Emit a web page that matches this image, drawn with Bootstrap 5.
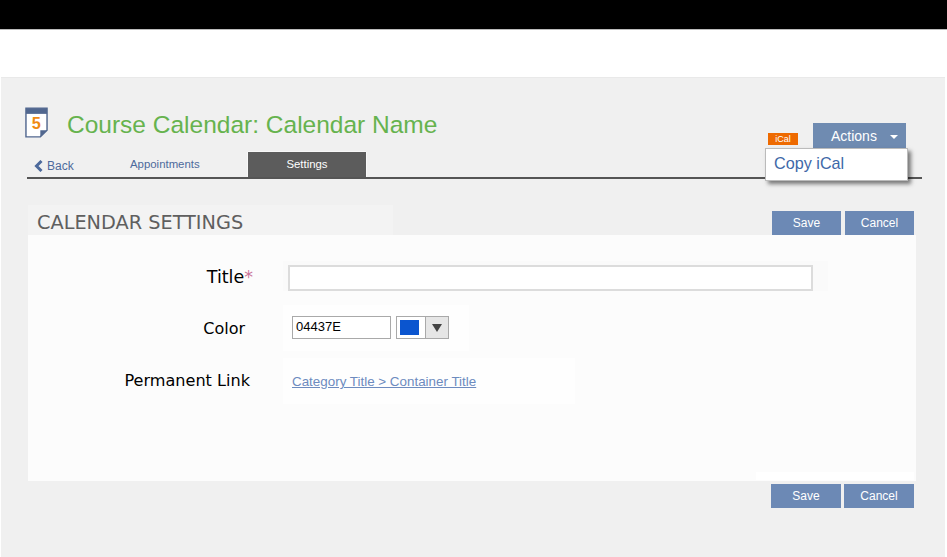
<!DOCTYPE html>
<html lang="en">
<head>
<meta charset="UTF-8">
<meta name="viewport" content="width=device-width, initial-scale=1.0">
<title>Calendar Settings</title>
<link href="https://cdn.jsdelivr.net/npm/bootstrap@5.3.0/dist/css/bootstrap.min.css" rel="stylesheet">
<style>
    html, body { height: 100%; overflow: hidden; }
    body { background: #fff; font-family: "Liberation Sans", Arial, sans-serif; }
    a { color: #40619b; text-decoration: none; }

    .top-bar { height: 29px; background: #000; border-bottom: 1px solid #bbb; box-sizing: content-box; }
    .top-space { height: 47px; }
    .page-area { height: 480px; margin: 0 2px 0 1px; background: #f0f0f0; border-top: 1px solid #e9e9e9; padding: 29px 23px 0 26px; }

    .head-row { height: 44px; position: relative; }
    .cal-icon { width: 23px; height: 31px; margin-left: -2px; flex: none; }
    .page-title { font-size: 24.5px; font-weight: 400; line-height: 30px; color: #66b34e; margin: 3px 0 0 19px; }

    .ical-tag { position: absolute; left: 741px; top: 26px; width: 30px; height: 12px; background: #ee6a00; color: #fff; font-size: 9px; line-height: 13px; text-align: center; }
    .actions-btn { position: absolute; left: 786px; top: 16px; width: 93px; height: 26px; border-radius: 0; border: 0; background: #6f8bb1; color: #fff; font-size: 14px; line-height: 26px; padding: 0 0 0 18px; text-align: left; }
    .actions-btn::after { content: ""; display: inline-block; margin-left: 13px; vertical-align: 2px; border: 4px solid transparent; border-top-color: #fff; border-bottom: 0; }
    .actions-menu { position: absolute; left: 738px; top: 41px; width: 143px; height: 33px; background: #fff; border: 1px solid #bbb; box-shadow: 3px 3px 4px rgba(0,0,0,.5); font-size: 16.2px; line-height: 28px; padding-left: 8px; color: #3e68a8; z-index: 5; }

    .tab-row { height: 28px; border-bottom: 2px solid #555; margin-right: 0; width: 895px; }
    .back-link { width: 103px; font-size: 12px; line-height: 15px; padding: 8px 0 0 7px; color: #4d6a9c; }
    .back-link svg { width: 9px; height: 12px; margin-right: 4px; vertical-align: -2px; }
    .tab-link { font-size: 11.4px; line-height: 27px; color: #4d6a9c; text-align: center; }
    .tab-appts { width: 118px; padding-right: 49px; margin-right: 0; white-space: nowrap; }
    .tab-active { width: 118px; height: 25px; margin-top: 1px; line-height: 25px; background: #5c5c5c; color: #fff; box-shadow: 0 -1px 0 #f8f8f8, 1px 0 0 #f8f8f8, -1px 0 0 #f8f8f8; }

    .section-head { height: 56px; padding-top: 26px; }
    .section-title { width: 365px; height: 30px; margin-left: 1px; background: #f3f3f3; color: #5f5f5f; font-size: 19.3px; font-family: "DejaVu Sans", Verdana, sans-serif; font-weight: 400; line-height: 35px; padding-left: 9px; margin-bottom: 0; white-space: nowrap; }
    .act-btn { width: 69px; height: 24px; padding: 0; border: 0; border-radius: 0; background: #6c89b5; color: #fff; font-size: 12px; line-height: 24px; }
    .btn-pair { gap: 4px; margin-right: 8px; padding-top: 5px; height: 30px; align-items: flex-end; }

    .form-panel { width: 888px; height: 246px; margin-left: 1px; background: #fcfcfc; padding-top: 26px; position: relative; }
    .panel-strip { position: absolute; right: 2px; bottom: 1px; width: 158px; height: 8px; background: #fff; }
    .form-line { display: flex; font-family: "DejaVu Sans", Verdana, sans-serif; font-size: 16px; color: #000; }
    .line-label { width: 255px; flex: none; text-align: right; }
    .label-title { height: 30px; }
    .label-title .line-label { padding-right: 30px; line-height: 32px; font-size: 17.5px; }
    .req-star { color: #c9739a; }
    .title-box { width: 545px; height: 30px; background: #fafafa; padding: 4px 15px 0 5px; }
    .title-input { display: block; width: 525px; height: 26px; border: 2px solid #dcdcdc; background: #fff; }

    .label-color { margin-top: 14px; height: 46px; }
    .label-color .line-label { padding-right: 38px; line-height: 48px; }
    .color-box { width: 186px; height: 46px; background: #fefefe; padding: 11px 0 0 9px; gap: 5px; }
    .color-input { width: 99px; height: 23px; border: 1px solid #a9a9a9; background: #fff; font-family: "Liberation Sans", Arial, sans-serif; font-size: 13px; line-height: 20px; padding-left: 3px; color: #000; }
    .color-pick { width: 53px; height: 23px; border: 1px solid #a9a9a9; background: #fff; }
    .swatch-cell { width: 28px; padding: 3px; }
    .swatch-fill { display: block; width: 19px; height: 15px; background: #0b55cf; }
    .arrow-cell { flex: 1; background: #e6e6e6; border-left: 1px solid #a9a9a9; }
    .arrow-cell::after { content: ""; border: 5px solid transparent; border-top: 8px solid #444; border-bottom: 0; }

    .label-link { margin-top: 7px; height: 46px; }
    .label-link .line-label { padding-right: 33px; line-height: 46px; font-size: 16.1px; }
    .link-box { width: 292px; height: 46px; background: #fefefe; padding-left: 9px; font-family: "Liberation Sans", Arial, sans-serif; font-size: 13.4px; line-height: 47px; }
    .link-box a { color: #6d8bbf; text-decoration: underline; }

    .foot-row .btn-pair { gap: 3px; margin-right: 8px; padding-top: 3px; height: 27px; }
    .foot-row .act-btn { width: 70px; }
</style>
</head>
<body>

<div class="top-bar"></div>
<div class="top-space"></div>

<div class="page-area">
    <!-- header -->
    <div class="head-row d-flex align-items-start">
        <svg class="cal-icon" viewBox="0 0 24 32">
            <path d="M1 1H23V24L16 31H1Z" fill="#fff" stroke="#51678f" stroke-width="1.5"/>
            <rect x="1" y="1" width="22" height="6" fill="#51678f"/>
            <path d="M16 31V24H23Z" fill="#51678f"/>
            <text x="7" y="23" font-family="Liberation Sans, sans-serif" font-size="17" font-weight="700" fill="#f08a12">5</text>
        </svg>
        <h1 class="page-title">Course Calendar: Calendar Name</h1>
        <span class="ical-tag">iCal</span>
        <button class="btn actions-btn" type="button">Actions</button>
        <div class="actions-menu">Copy iCal</div>
    </div>

    <!-- tabs -->
    <div class="tab-row d-flex">
        <a class="back-link" href="#"><svg viewBox="0 0 9 12"><path d="M7.5 1L2.5 6L7.5 11" fill="none" stroke="#4d6a9c" stroke-width="3"/></svg>Back</a>
        <a class="tab-link tab-appts" href="#">Appointments</a>
        <a class="tab-link tab-active" href="#">Settings</a>
    </div>

    <!-- settings -->
    <div class="section-head d-flex justify-content-between">
        <h2 class="section-title">CALENDAR SETTINGS</h2>
        <div class="btn-pair d-flex">
            <button class="btn act-btn" type="button">Save</button>
            <button class="btn act-btn" type="button">Cancel</button>
        </div>
    </div>

    <div class="form-panel">
        <div class="form-line label-title">
            <div class="line-label">Title<span class="req-star">*</span></div>
            <div class="title-box"><input class="title-input" type="text"></div>
        </div>
        <div class="form-line label-color">
            <div class="line-label">Color</div>
            <div class="color-box d-flex">
                <div class="color-input">04437E</div>
                <div class="color-pick d-flex">
                    <span class="swatch-cell"><span class="swatch-fill"></span></span>
                    <span class="arrow-cell d-flex align-items-center justify-content-center"></span>
                </div>
            </div>
        </div>
        <div class="form-line label-link">
            <div class="line-label">Permanent Link</div>
            <div class="link-box"><a href="#">Category Title &gt; Container Title</a></div>
        </div>
        <div class="panel-strip"></div>
    </div>

    <div class="foot-row d-flex justify-content-end">
        <div class="btn-pair d-flex">
            <button class="btn act-btn" type="button">Save</button>
            <button class="btn act-btn" type="button">Cancel</button>
        </div>
    </div>
</div>

<script src="https://cdn.jsdelivr.net/npm/bootstrap@5.3.0/dist/js/bootstrap.bundle.min.js"></script>
</body>
</html>
